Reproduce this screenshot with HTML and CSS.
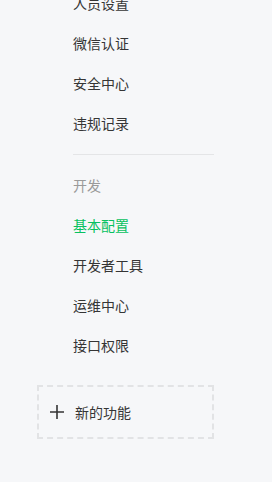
FILE: index.html
```html
<!DOCTYPE html>
<html lang="zh-CN">
<head>
    <meta charset="UTF-8">
    <meta name="viewport" content="width=device-width, initial-scale=1.0">
    <title>菜单</title>
    <link rel="stylesheet" href="styles.css">
</head>
<body>
    <div class="sidebar">
        <ul class="menu">
            <li class="item">人员设置</li>
            <li class="item">微信认证</li>
            <li class="item">安全中心</li>
            <li class="item">违规记录</li>
        </ul>
        <div class="divider"></div>
        <ul class="menu">
            <li class="item title">开发</li>
            <li class="item active">基本配置</li>
            <li class="item">开发者工具</li>
            <li class="item">运维中心</li>
            <li class="item">接口权限</li>
        </ul>
        <div class="add-box">
            <svg class="plus" width="16" height="16" viewBox="0 0 16 16">
                <path d="M8 1v14M1 8h14" stroke="#353535" stroke-width="1.6" fill="none"/>
            </svg>
            <span>新的功能</span>
        </div>
    </div>
</body>
</html>
```

FILE: styles.css
```css
body {
    margin: 0;
    background-color: #f6f7f9;
    font-family: "Noto Sans CJK SC", "Noto Sans", sans-serif;
    font-size: 14px;
    color: #353535;
}
.sidebar {
    margin-top: -17px;
    padding-left: 37px;
    width: 177px;
}
.menu {
    list-style: none;
    margin: 0;
    padding: 0 0 0 36px;
}
.item {
    height: 40px;
    line-height: 40px;
}
.item.title {
    color: #9a9a9a;
}
.item.active {
    color: #07c160;
}
.divider {
    height: 1px;
    margin: 11px 0 10px 36px;
    background-color: #e4e5e7;
}
.add-box {
    display: flex;
    align-items: center;
    height: 50px;
    margin-top: 20px;
    padding-left: 10px;
    border: 2px dashed #e2e3e5;
}
.plus {
    margin-right: 10px;
}
```
